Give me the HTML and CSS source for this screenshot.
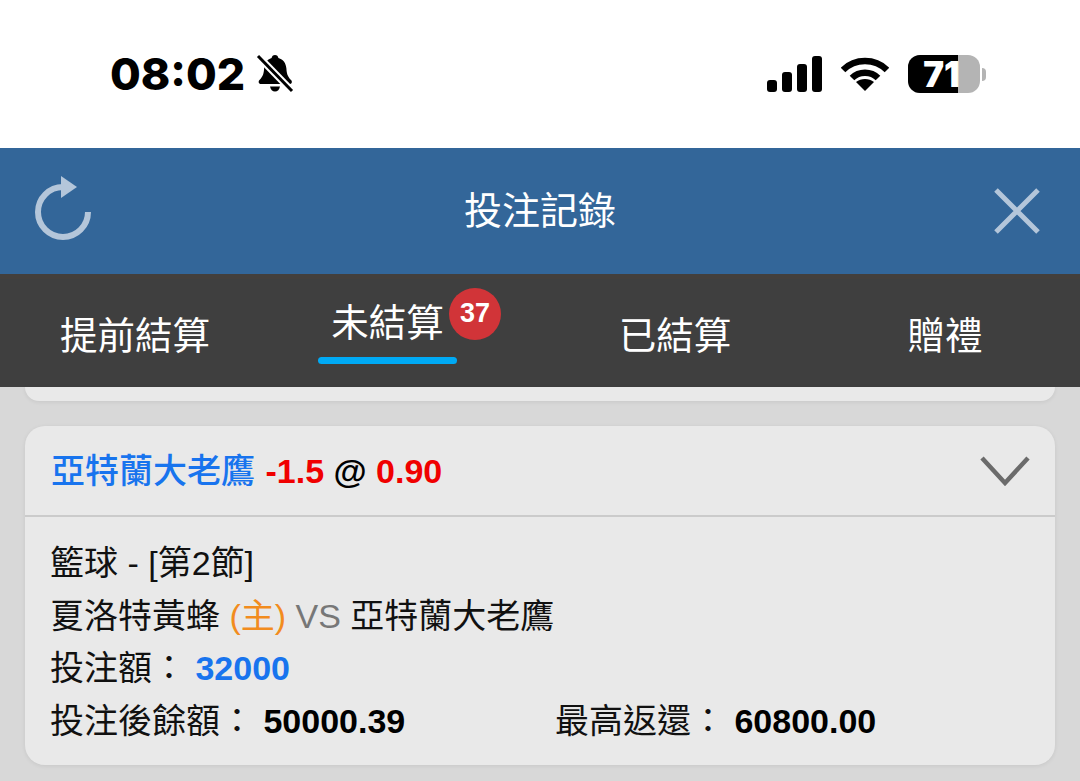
FILE: index.html
```html
<!DOCTYPE html>
<html lang="zh-Hant">
    <head>
        <meta charset="utf-8" />
        <title>投注記錄</title>
        <link rel="stylesheet" href="styles.css">
    </head>

    <body>
        <div class="status-bar">
            <div class="status-left">
                <span class="clock">08:02</span>
                <svg class="bell" viewBox="0 0 38 40" width="38" height="40">
                    <path d="M19 1c2 0 3 1 3.400 3 5 1.400 7.600 5.400 8 10.500.3 4.500 1 8 4.600 11.500 1.500 1.500 1 4-1.500 4H5c-2.500 0-3-2.500-1.500-4 3.600-3.500 4.300-7 4.600-11.500C8.500 9.400 11 5.400 15.600 4 16 2 17 1 19 1z" />
                    <path d="M14 32.500h10c-.5 3-2.500 5-5 5s-4.500-2-5-5z" />
                    <path class="bell-gap" d="M2 2l34 35" />
                    <path class="bell-slash" d="M2 2l34 35" />
                </svg>
            </div>
            <div class="status-right">
                <svg class="signal" viewBox="0 0 55 36" width="55" height="36">
                    <rect x="0" y="24" width="10" height="12" rx="3" />
                    <rect x="15" y="16" width="10" height="20" rx="3" />
                    <rect x="30" y="8" width="10" height="28" rx="3" />
                    <rect x="45" y="0" width="10" height="36" rx="3" />
                </svg>
                <svg class="wifi" viewBox="0 0 48 36" width="48" height="36">
                    <path d="M2 14C14 2 34 2 46 14" />
                    <path d="M11 22c7-7 19-7 26 0" />
                    <path class="wifi-dot" d="M24 35l-9-9c5-4 13-4 18 0z" />
                </svg>
                <div class="battery">
                    <div class="battery-body">
                        <div class="battery-fill"></div>
                        <span class="battery-num">71</span>
                    </div>
                    <div class="battery-nub"></div>
                </div>
            </div>
        </div>

        <div class="title-bar">
            <svg class="title-icon refresh" viewBox="0 0 60 66" width="60" height="66">
                <path class="refresh-arc" d="M53 36a25 25 0 1 1-25-25" />
                <path class="refresh-head" d="M26 0l16 11-16 11z" />
            </svg>
            <h1 class="title">投注記錄</h1>
            <svg class="title-icon" viewBox="0 0 48 48" width="48" height="48">
                <path class="close-x" d="M3 3l42 42M45 3L3 45" />
            </svg>
        </div>

        <div class="tabs">
            <div class="tab">提前結算</div>
            <div class="tab tab-active">
                <div class="tab-label">
                    未結算
                    <span class="badge">37</span>
                </div>
            </div>
            <div class="tab">已結算</div>
            <div class="tab">贈禮</div>
        </div>

        <div class="content">
            <div class="card-tail"></div>
            <div class="card">
                <div class="card-head">
                    <div class="bet-line">
                        <span class="team">亞特蘭大老鷹</span>
                        <span class="odds">-1.5</span>
                        <span class="at">@</span>
                        <span class="odds">0.90</span>
                    </div>
                    <svg class="chevron" viewBox="0 0 50 32" width="50" height="32">
                        <path d="M2 3l23 25L48 3" />
                    </svg>
                </div>
                <div class="card-body">
                    <div class="row">籃球 - [第2節]</div>
                    <div class="row">夏洛特黃蜂 <span class="home">(主)</span> <span class="vs">VS</span> 亞特蘭大老鷹</div>
                    <div class="row">投注額： <b class="stake">32000</b></div>
                    <div class="row row-split">
                        <div>投注後餘額： <b>50000.39</b></div>
                        <div>最高返還： <b>60800.00</b></div>
                    </div>
                </div>
            </div>
        </div>
    </body>
</html>
```

FILE: styles.css
```css
html, body {
    margin: 0;
    height: 781px;
    overflow: hidden;
}
body {
    background: #d8d8d8;
    font-family: "Liberation Sans", "Noto Sans CJK TC", sans-serif;
    color: #111111;
}
.status-bar {
    height: 148px;
    background: #ffffff;
    display: flex;
    justify-content: space-between;
    align-items: center;
    padding: 0 94px 0 110px;
    box-sizing: border-box;
}
.status-left {
    display: flex;
    align-items: center;
    gap: 11px;
}
.clock {
    font-family: Inter, "Liberation Sans", sans-serif;
    font-weight: 800;
    font-size: 44.500px;
    line-height: 50px;
    color: #000000;
}
.bell path {
    fill: #000000;
}
.bell .bell-gap {
    fill: none;
    stroke: #ffffff;
    stroke-width: 7;
}
.bell .bell-slash {
    fill: none;
    stroke: #000000;
    stroke-width: 3;
}
.status-right {
    display: flex;
    align-items: center;
    gap: 19px;
}
.signal rect {
    fill: #000000;
}
.wifi path {
    fill: none;
    stroke: #000000;
    stroke-width: 6.500;
}
.wifi .wifi-dot {
    fill: #000000;
    stroke: none;
}
.battery {
    display: flex;
    align-items: center;
    gap: 2px;
}
.battery-body {
    position: relative;
    width: 72px;
    height: 38px;
    border-radius: 12px;
    background: #b4b4b4;
    overflow: hidden;
    display: flex;
    align-items: center;
    justify-content: center;
}
.battery-fill {
    position: absolute;
    left: 0;
    top: 0;
    bottom: 0;
    width: 50px;
    background: #000000;
}
.battery-num {
    position: relative;
    font-family: Inter, "Liberation Sans", sans-serif;
    font-weight: 900;
    font-size: 35px;
    color: #ffffff;
    margin-right: 5px;
}
.battery-nub {
    width: 4px;
    height: 13px;
    border-radius: 0 4px 4px 0;
    background: #b4b4b4;
}
.title-bar {
    height: 126px;
    background: #336699;
    display: flex;
    justify-content: space-between;
    align-items: center;
    padding: 0 39px 0 35px;
    box-sizing: border-box;
}
.refresh {
    margin-bottom: 4px;
}
.title {
    margin: 0 0 8px -8px;
    font-weight: 400;
    font-size: 38px;
    color: #ffffff;
}
.refresh-arc {
    fill: none;
    stroke: #b4c6da;
    stroke-width: 6;
}
.refresh-head {
    fill: #b4c6da;
}
.close-x {
    fill: none;
    stroke: #b4c6da;
    stroke-width: 5;
}
.tabs {
    height: 113px;
    box-sizing: border-box;
    border-top: 5px solid #433f3c;
    background: #3f3f3f;
    display: flex;
}
.tab {
    flex: 1;
    display: flex;
    align-items: center;
    justify-content: center;
    font-size: 37.500px;
    color: #ffffff;
    padding-bottom: 1px;
}
.tab-active {
    padding-bottom: 0;
    align-items: flex-start;
}
.tab-label {
    position: relative;
    width: 139px;
    margin-right: 35px;
    margin-top: 22px;
    text-align: center;
    line-height: 44px;
}
.tab-label::after {
    content: "";
    position: absolute;
    left: 0;
    right: 0;
    top: 56px;
    height: 7px;
    border-radius: 4px;
    background: #00aaf5;
}
.badge {
    position: absolute;
    left: 131px;
    top: -13px;
    width: 52px;
    height: 52px;
    border-radius: 50%;
    background: #d13438;
    color: #ffffff;
    font-size: 27px;
    font-weight: 700;
    line-height: 50px;
    text-align: center;
}
.content {
    padding: 0 25px;
}
.card-tail {
    height: 14px;
    background: #e9e9e9;
    border-radius: 0 0 20px 20px;
    box-shadow: 0 1px 4px rgba(0, 0, 0, 0.08);
}
.card {
    margin-top: 25px;
    height: 339px;
    background: #e9e9e9;
    border-radius: 20px;
    box-shadow: 0 1px 4px rgba(0, 0, 0, 0.08);
    font-size: 34px;
}
.card-head {
    height: 89px;
    border-bottom: 2px solid #cbcbcb;
    display: flex;
    justify-content: space-between;
    align-items: center;
    padding: 0 25px 0 26px;
}
.bet-line {
    font-weight: 700;
    font-size: 34px;
    margin-bottom: 4px;
}
.team {
    color: #1874ee;
    font-weight: 500;
    margin-right: 1px;
}
.odds {
    color: #f00000;
}
.at {
    color: #000000;
}
.chevron path {
    fill: none;
    stroke: #6b6b6b;
    stroke-width: 4.500;
}
.card-body {
    padding: 20px 25px 0 26px;
}
.row {
    height: 52.500px;
    line-height: 52.500px;
    white-space: nowrap;
    margin-left: -1px;
}
.row b {
    font-size: 34px;
    color: #000000;
}
.row-split {
    display: grid;
    grid-template-columns: 505px 1fr;
}
.home {
    color: #f28c1e;
}
.vs {
    color: #777777;
}
.row .stake {
    color: #1874ee;
}
```
